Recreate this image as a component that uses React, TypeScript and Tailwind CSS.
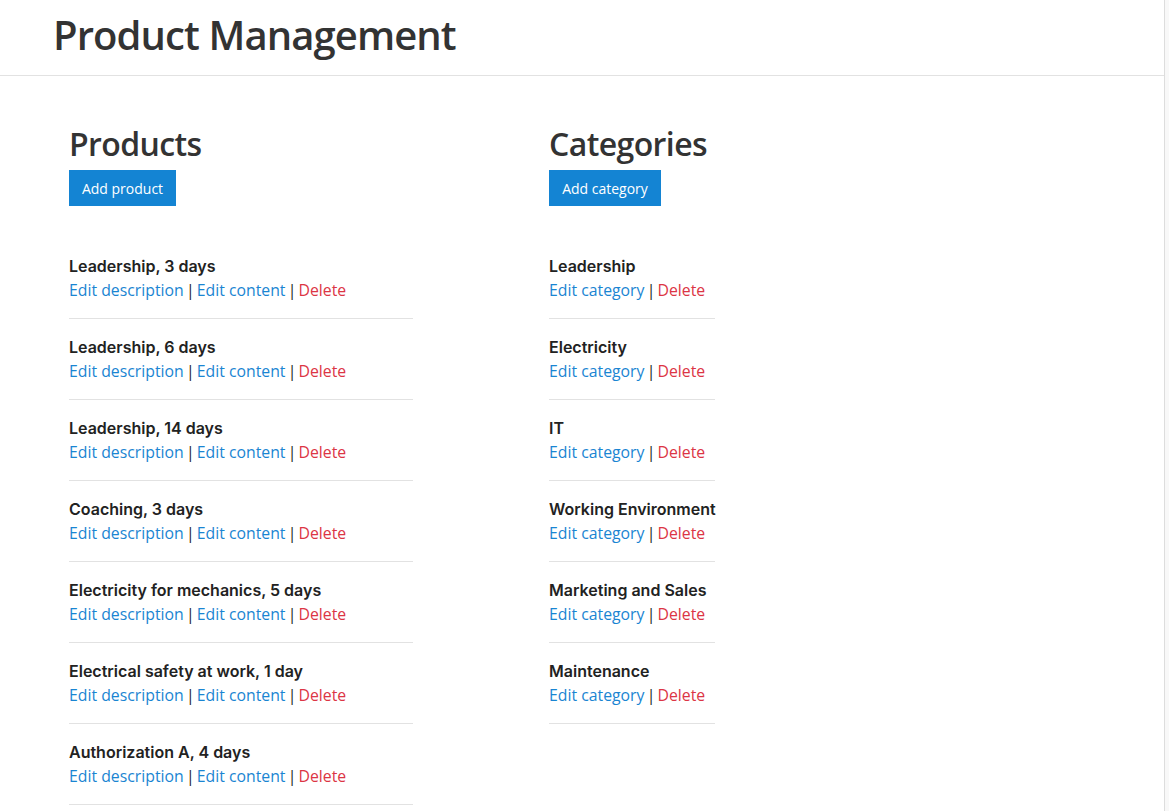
import React from "react";

const products = [
  "Leadership, 3 days",
  "Leadership, 6 days",
  "Leadership, 14 days",
  "Coaching, 3 days",
  "Electricity for mechanics, 5 days",
  "Electrical safety at work, 1 day",
  "Authorization A, 4 days",
];

const categories = [
  "Leadership",
  "Electricity",
  "IT",
  "Working Environment",
  "Marketing and Sales",
  "Maintenance",
];

const linkFont = { fontFamily: '"Open Sans", "Noto Sans", sans-serif' };
const titleFont = { fontFamily: 'Inter, "Liberation Sans", sans-serif' };

function Sep() {
  return <span className="inline-block w-[13px] text-center text-[#222222]">|</span>;
}

export default function App() {
  return (
    <div className="flex min-h-[811px] bg-[#f8f8f8]">
      <div className="w-[1165px] shrink-0 bg-white border-r border-[#dddddd] min-h-[811px] text-[#333333]" style={linkFont}>
        <header className="h-[76px] border-b border-[#e2e2e2] pl-[53px] pt-[9px]">
          <h1 className="text-[40px] leading-[52px] font-semibold tracking-[-0.9px] text-[#333333]">Product Management</h1>
        </header>
        <main className="flex pl-[69px] pt-[46px]">
          <section className="w-[480px] shrink-0">
            <h2 className="text-[32px] leading-[44px] font-semibold tracking-[-0.6px] text-[#333333]">Products</h2>
            <button className="mt-[4px] h-[36px] w-[107px] bg-[#1484d3] text-white text-[14px]">Add product</button>
            <ul className="mt-[48px] w-[344px]">
              {products.map((p) => (
                <li key={p} className="border-b border-[#e2e2e2] pb-[16px] mb-[16px]">
                  <div className="text-[16px] leading-[24px] font-semibold text-[#222222]" style={titleFont}>{p}</div>
                  <div className="text-[15.8px] leading-[24px] text-[#333333] whitespace-nowrap">
                    <a className="text-[#1a85d2]">Edit description</a><Sep /><a className="text-[#1a85d2]">Edit content</a><Sep /><a className="text-[#dc3545]">Delete</a>
                  </div>
                </li>
              ))}
            </ul>
          </section>
          <section>
            <h2 className="text-[32px] leading-[44px] font-semibold tracking-[-0.6px] text-[#333333]">Categories</h2>
            <button className="mt-[4px] h-[36px] w-[112px] bg-[#1484d3] text-white text-[14px]">Add category</button>
            <ul className="mt-[48px] w-[166px]">
              {categories.map((c) => (
                <li key={c} className="border-b border-[#e2e2e2] pb-[16px] mb-[16px]">
                  <div className="text-[16px] leading-[24px] font-semibold text-[#222222] whitespace-nowrap" style={titleFont}>{c}</div>
                  <div className="text-[15.8px] leading-[24px] text-[#333333] whitespace-nowrap">
                    <a className="text-[#1a85d2]">Edit category</a><Sep /><a className="text-[#dc3545]">Delete</a>
                  </div>
                </li>
              ))}
            </ul>
          </section>
        </main>
      </div>
    </div>
  );
}
